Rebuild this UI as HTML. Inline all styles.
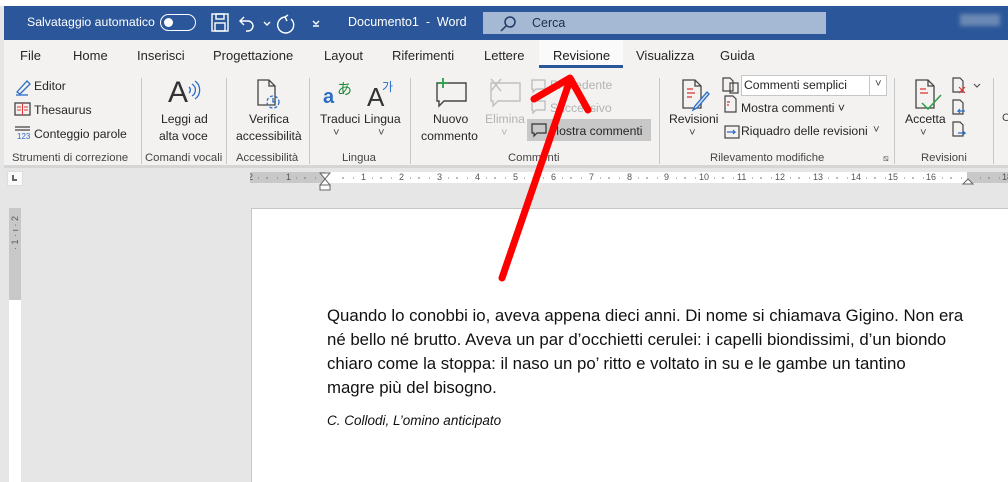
<!DOCTYPE html>
<html><head><meta charset="utf-8">
<style>
*{margin:0;padding:0;box-sizing:border-box}
body{width:1008px;height:482px;overflow:hidden;background:#e6e6e6;font-family:"Liberation Sans",sans-serif;position:relative;color:#262626}
.a{position:absolute;white-space:nowrap}
.t{font-size:12.2px}
.s{font-size:11.3px;color:#444}
.dis{color:#b3b3b3}
.sep{position:absolute;width:1px;background:#c8c8c8;top:78px;height:86px}
</style></head><body>
<div class="a" style="left:0;top:0;width:1008px;height:6px;background:#fff"></div>
<div class="a" style="left:4px;top:6px;width:1004px;height:34px;background:#2b579a"></div>
<div class="a" style="left:27px;top:15px;color:#fff;font-size:12.3px">Salvataggio automatico</div>
<div class="a" style="left:160px;top:14px;width:36px;height:17px;border:1.5px solid #fff;border-radius:9px"></div>
<div class="a" style="left:164px;top:18px;width:9px;height:9px;background:#fff;border-radius:50%"></div>
<svg class="a" style="left:210px;top:12px" width="120" height="22" fill="none" stroke="#fff" stroke-width="1.4">
<rect x="2" y="2" width="16" height="17"/><rect x="6" y="2" width="8" height="5"/><rect x="5" y="11" width="10" height="8"/>
<path d="M34 5 l-4 4 4 4 M30 9 h8 a5 5 0 0 1 0 10 h-2"/><path d="M54 10 l3 3 3 -3"/>
<path d="M75 5 a8 8 0 1 0 6 2 M75 5 l3 -2 M75 5 l2 4"/>
<path d="M103 9 l3 3 3 -3 M103 14 h6"/>
</svg>
<div class="a" style="left:348px;top:15px;color:#fff;font-size:12.5px">Documento1&nbsp; - &nbsp;Word</div>
<div class="a" style="left:483px;top:12px;width:343px;height:22px;background:#a5b8d4"></div>
<svg class="a" style="left:500px;top:15px" width="18" height="18" fill="none" stroke="#1f3b66" stroke-width="1.5"><circle cx="10" cy="7" r="5"/><path d="M6 11 l-5 5"/></svg>
<div class="a" style="left:532px;top:16px;color:#1f2d44;font-size:12.5px">Cerca</div>
<div class="a" style="left:960px;top:14px;width:40px;height:12px;background:#6b88b4;filter:blur(2px)"></div>

<div class="a" style="left:4px;top:40px;width:1004px;height:126px;background:#f3f2f1"></div>
<div class="a" style="left:4px;top:165px;width:1004px;height:3px;background:#d5d5d5"></div>
<div class="a" style="left:20px;top:48px;font-size:13px">File</div>
<div class="a" style="left:73px;top:48px;font-size:13px">Home</div>
<div class="a" style="left:137px;top:48px;font-size:13px">Inserisci</div>
<div class="a" style="left:213px;top:48px;font-size:13px">Progettazione</div>
<div class="a" style="left:324px;top:48px;font-size:13px">Layout</div>
<div class="a" style="left:392px;top:48px;font-size:13px">Riferimenti</div>
<div class="a" style="left:484px;top:48px;font-size:13px">Lettere</div>
<div class="a" style="left:539px;top:40px;width:84px;height:28px;background:#fafafa"></div>
<div class="a" style="left:553px;top:48px;font-size:13px;color:#1a1a1a">Revisione</div>
<div class="a" style="left:539px;top:65px;width:84px;height:3px;background:#2b579a"></div>
<div class="a" style="left:636px;top:48px;font-size:13px">Visualizza</div>
<div class="a" style="left:720px;top:48px;font-size:13px">Guida</div>

<svg class="a" style="left:14px;top:78px" width="20" height="70" fill="none" stroke-width="1.3">
<path d="M3 14 L13 3 l3 3 L6 16z" stroke="#2b6cc4"/><path d="M2 17 h12" stroke="#2b6cc4"/>
<rect x="1" y="25" width="15" height="12" stroke="#444"/><path d="M8.5 25 v12 M3 29 h4 M10 29 h4 M3 32 h4 M10 32 h4" stroke="#d33" stroke-width="1"/>
<path d="M1 49 h15 M1 52 h15" stroke="#444"/><text x="3" y="61" font-size="8" fill="#2b6cc4" stroke="none" font-family="Liberation Sans">123</text>
</svg>
<div class="a t" style="left:34px;top:79px">Editor</div>
<div class="a t" style="left:34px;top:103px">Thesaurus</div>
<div class="a t" style="left:34px;top:127px">Conteggio parole</div>
<div class="a s" style="left:12px;top:152px">Strumenti di correzione</div>
<div class="sep" style="left:141px"></div>
<div class="a" style="left:168px;top:76px;font-size:30px;color:#333">A</div>
<svg class="a" style="left:187px;top:80px" width="14" height="20" fill="none" stroke="#2b6cc4" stroke-width="1.3"><path d="M2 7 a4 4 0 0 1 0 6 M5 4 a7 7 0 0 1 0 12 M8 1 a11 11 0 0 1 0 18"/></svg>
<div class="a t" style="left:161px;top:112px">Leggi ad</div>
<div class="a t" style="left:159px;top:129px">alta voce</div>
<div class="a s" style="left:145px;top:152px">Comandi vocali</div>
<div class="sep" style="left:226px"></div>
<svg class="a" style="left:255px;top:78px" width="30" height="32" fill="none" stroke-width="1.3"><path d="M3 2 h11 l6 6 v19 h-17z M14 2 v6 h6" stroke="#444"/><circle cx="18" cy="24" r="6" stroke="#2b6cc4" stroke-dasharray="3 2"/><path d="M18 20 v4 h3" stroke="#2b6cc4"/></svg>
<div class="a t" style="left:249px;top:112px">Verifica</div>
<div class="a t" style="left:236px;top:129px">accessibilità</div>
<div class="a s" style="left:236px;top:152px">Accessibilità</div>
<div class="sep" style="left:309px"></div>
<div class="a" style="left:323px;top:86px;font-size:20px;color:#2b6cc4;font-weight:bold">a</div>
<div class="a" style="left:337px;top:78px;font-size:15px;color:#1f8a3a;font-family:'Noto Sans CJK JP',sans-serif">あ</div>
<div class="a" style="left:367px;top:82px;font-size:26px;color:#333">A</div>
<div class="a" style="left:382px;top:78px;font-size:12px;color:#2b6cc4;font-family:'Noto Sans CJK KR',sans-serif">가</div>
<div class="a t" style="left:320px;top:112px">Traduci</div>
<div class="a t" style="left:364px;top:112px">Lingua</div>
<div class="a s" style="left:333px;top:127px">˅</div><div class="a s" style="left:378px;top:127px">˅</div>
<div class="a s" style="left:342px;top:152px">Lingua</div>
<div class="sep" style="left:410px"></div>
<svg class="a" style="left:434px;top:78px" width="100" height="30" fill="none" stroke-width="1.4"><path d="M3 5 h29 v18 h-22 l-5 5 v-5 h-2z" stroke="#444"/><path d="M9 0 v10 M4 5 h10" stroke="#2e9e48" stroke-width="1.8"/><path d="M57 5 h29 v18 h-22 l-5 5 v-5 h-2z M57 1 l10 12 M67 1 l-10 12" stroke="#c0c0c0"/></svg>
<div class="a t" style="left:433px;top:112px">Nuovo</div>
<div class="a t" style="left:421px;top:129px">commento</div>
<div class="a t dis" style="left:485px;top:112px">Elimina</div>
<div class="a s dis" style="left:501px;top:127px">˅</div>
<svg class="a" style="left:530px;top:77px" width="20" height="40" fill="none" stroke="#b8b8b8" stroke-width="1.2"><path d="M2 3 h13 v9 h-9 l-3 3 v-3 h-1z M2 24 h13 v9 h-9 l-3 3 v-3 h-1z"/></svg>
<div class="a t dis" style="left:550px;top:78px">Precedente</div>
<div class="a t dis" style="left:550px;top:101px">Successivo</div>
<div class="a" style="left:527px;top:119px;width:124px;height:22px;background:#c8c8c8"></div>
<svg class="a" style="left:531px;top:122px" width="18" height="16" fill="none" stroke="#333" stroke-width="1.2"><path d="M1 2 h14 v9 h-9 l-3 3 v-3 h-2z"/></svg>
<div class="a t" style="left:549px;top:124px">Mostra commenti</div>
<div class="a s" style="left:508px;top:152px">Commenti</div>
<div class="sep" style="left:659px"></div>
<svg class="a" style="left:680px;top:78px" width="32" height="34" fill="none" stroke-width="1.3"><path d="M3 2 h12 l6 6 v22 h-18z M15 2 v6 h6" stroke="#444"/><path d="M7 11 h6 M7 15 h8 M7 19 h5" stroke="#d33"/><path d="M27 14 l-12 14 -2 4 4 -2 12 -14z" stroke="#2b6cc4" fill="#cfe0f5"/></svg>
<div class="a t" style="left:669px;top:112px">Revisioni</div>
<div class="a s" style="left:689px;top:127px">˅</div>
<svg class="a" style="left:721px;top:76px" width="20" height="66" fill="none" stroke-width="1.2"><path d="M2 2 h7 l3 3 v10 h-10z" stroke="#444"/><path d="M9 7 h8 v10 h-8z" stroke="#444"/><path d="M4 20 h8 l3 3 v13 h-11z" stroke="#444"/><path d="M6 26 h3 M6 29 h2" stroke="#d33"/><rect x="4" y="50" width="14" height="12" stroke="#444"/><path d="M6 56 h8 l-2 -2 M14 56 l-2 2" stroke="#2b6cc4"/></svg>
<div class="a" style="left:741px;top:75px;width:146px;height:21px;background:#fff;border:1px solid #c6c6c6"></div>
<div class="a" style="left:869px;top:75px;width:1px;height:21px;background:#c6c6c6"></div>
<div class="a t" style="left:744px;top:78px">Commenti semplici</div>
<div class="a s" style="left:875px;top:78px">˅</div>
<div class="a t" style="left:741px;top:101px">Mostra commenti ˅</div>
<div class="a t" style="left:741px;top:124px">Riquadro delle revisioni</div>
<div class="a s" style="left:873px;top:124px">˅</div>
<div class="a s" style="left:710px;top:152px">Rilevamento modifiche</div>
<div class="a" style="left:883px;top:153px;font-size:9px;color:#555">⧅</div>
<div class="sep" style="left:894px"></div>
<svg class="a" style="left:913px;top:78px" width="30" height="34" fill="none" stroke-width="1.3"><path d="M3 2 h12 l6 6 v22 h-18z M15 2 v6 h6" stroke="#444"/><path d="M7 11 h6 M7 15 h8" stroke="#d33"/><path d="M9 25 l6 6 13 -14" stroke="#2e9e48" stroke-width="1.5"/></svg>
<svg class="a" style="left:951px;top:76px" width="36" height="66" fill="none" stroke-width="1.2"><path d="M2 2 h7 l3 3 v11 h-10z M2 24 h7 l3 3 v11 h-10z M2 46 h7 l3 3 v11 h-10z" stroke="#444"/><path d="M8 11 l6 6 M14 11 l-6 6" stroke="#d33"/><path d="M14 35 h-7 l2 -2 M7 35 l2 2 M7 57 h7 l-2 -2 M14 57 l-2 2" stroke="#2b6cc4"/><path d="M23 8 l3 3 3 -3" stroke="#555"/></svg>
<div class="a t" style="left:905px;top:112px">Accetta</div>
<div class="a s" style="left:920px;top:127px">˅</div>
<div class="a s" style="left:921px;top:152px">Revisioni</div>
<div class="sep" style="left:993px"></div>
<div class="a s" style="left:1002px;top:112px">C</div>

<div class="a" style="left:7px;top:171px;width:16px;height:15px;background:#fafafa;border:1px solid #ddd"></div>
<div class="a" style="left:12px;top:175px;width:5px;height:6px;border-left:2px solid #666;border-bottom:2px solid #666"></div>
<div class="a" style="left:250px;top:172px;width:758px;height:11px;background:#fff"></div>
<div class="a" style="left:250px;top:172px;width:75px;height:11px;background:#c8c8c8"></div>
<div class="a" style="left:967px;top:172px;width:41px;height:11px;background:#c8c8c8"></div>
<svg class="a" style="left:250px;top:170px" width="758" height="22" font-family="Liberation Sans" font-size="9" fill="#555">
<g stroke="#777" stroke-width="1">
<path d="M17 7 v2 M55 7 v2 M93 7 v2 M131 7 v2 M169 7 v2 M207 7 v2 M245 7 v2 M283 7 v2 M321 7 v2 M359 7 v2 M397 7 v2 M435 7 v2 M473 7 v2 M511 7 v2 M549 7 v2 M587 7 v2 M625 7 v2 M663 7 v2 M701 7 v2 M739 7 v2"/>
<path d="M8 8 h1 M27 8 h1 M46 8 h1 M65 8 h1 M103 8 h1 M122 8 h1 M141 8 h1 M160 8 h1 M179 8 h1 M198 8 h1 M217 8 h1 M236 8 h1 M255 8 h1 M274 8 h1 M293 8 h1 M312 8 h1 M331 8 h1 M350 8 h1 M369 8 h1 M388 8 h1 M407 8 h1 M426 8 h1 M445 8 h1 M464 8 h1 M483 8 h1 M502 8 h1 M521 8 h1 M540 8 h1 M559 8 h1 M578 8 h1 M597 8 h1 M616 8 h1 M635 8 h1 M654 8 h1 M673 8 h1 M692 8 h1 M711 8 h1 M730 8 h1 M749 8 h1"/>
</g>
<text x="-2" y="10">2</text><text x="36" y="10">1</text>
<text x="111" y="10">1</text><text x="149" y="10">2</text><text x="187" y="10">3</text><text x="225" y="10">4</text><text x="263" y="10">5</text><text x="301" y="10">6</text><text x="339" y="10">7</text><text x="377" y="10">8</text><text x="414" y="10">9</text><text x="449" y="10">10</text><text x="487" y="10">11</text><text x="525" y="10">12</text><text x="563" y="10">13</text><text x="601" y="10">14</text><text x="638" y="10">15</text><text x="676" y="10">16</text><text x="752" y="10">18</text>
<path d="M70 3 l10 0 -5 6 z M70 15 l10 0 -5 -6z M70 15 h10 v5 h-10z M713 14 l5 -5 5 5z" fill="#fff" stroke="#666"/>
</svg>
<div class="a" style="left:9px;top:208px;width:12px;height:274px;background:#fff"></div>
<div class="a" style="left:9px;top:208px;width:12px;height:92px;background:#c8c8c8"></div>
<div class="a" style="left:10px;font-size:9px;color:#555;transform:rotate(-90deg);transform-origin:left top;top:250px">· 1 · ı · 2</div>

<div class="a" style="left:251px;top:208px;width:757px;height:274px;background:#fff;border-left:1px solid #c6c6c6;border-top:1px solid #c6c6c6"></div>
<div class="a" style="left:327px;top:304px;font-size:16.8px;line-height:24px;color:#111">
Quando lo conobbi io, aveva appena dieci anni. Di nome si chiamava Gigino. Non era<br>
né bello né brutto. Aveva un par d’occhietti cerulei: i capelli biondissimi, d’un biondo<br>
chiaro come la stoppa: il naso un po’ ritto e voltato in su e le gambe un tantino<br>
magre più del bisogno.</div>
<div class="a" style="left:327px;top:413px;font-size:13.5px;font-style:italic;color:#111">C. Collodi, L’omino anticipato</div>

<svg class="a" style="left:0;top:0" width="1008" height="482" fill="none" stroke="#ff0000" stroke-width="7" stroke-linecap="round" stroke-linejoin="round">
<path d="M502 278 L570 80 M534 99 L570 78 L588 110"/>
</svg>
</body></html>
